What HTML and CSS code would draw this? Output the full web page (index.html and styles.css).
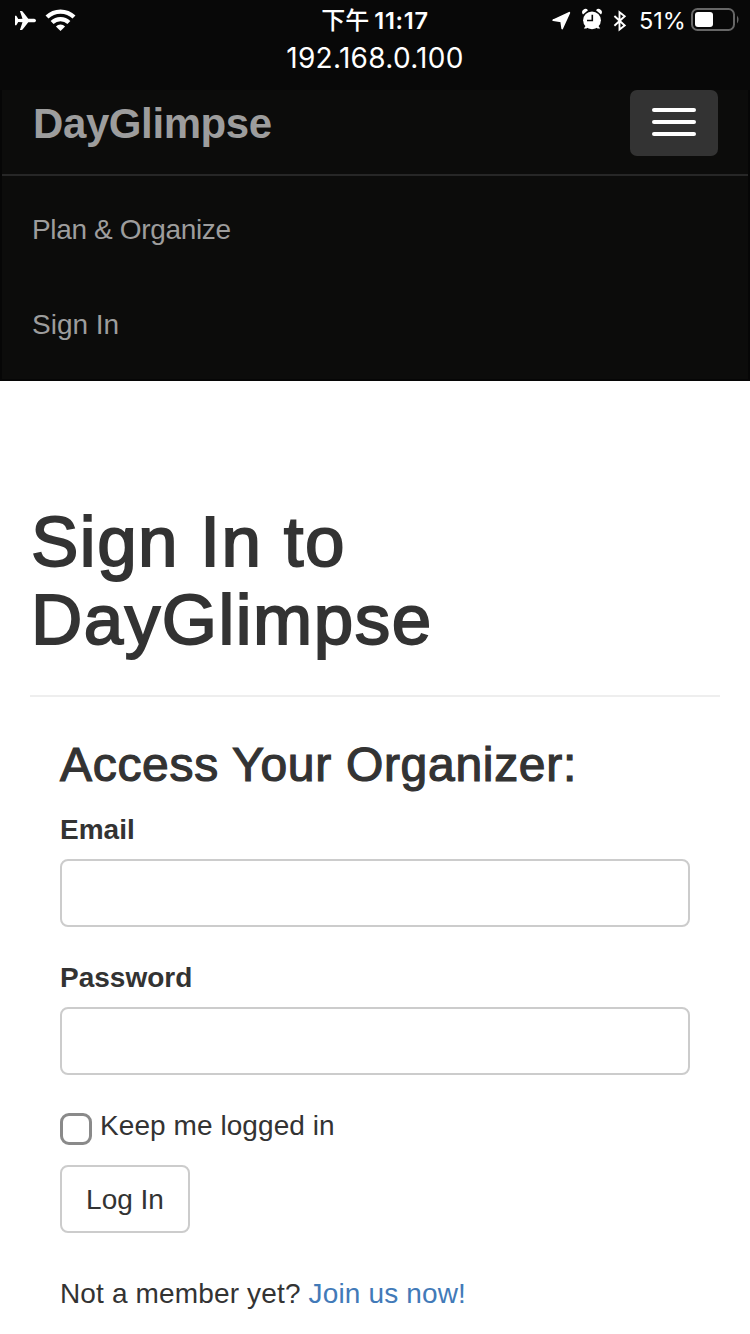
FILE: index.html
```html
<!DOCTYPE html>
<html lang="en">
<head>
<meta charset="utf-8">
<title>DayGlimpse</title>
<link rel="stylesheet" href="styles.css">
</head>
<body>
<header class="status">
  <div class="status-row">
    <svg class="status-left" width="80" height="40" viewBox="0 0 80 40" fill="#fff">
      <path d="M36 20.400c0-1.200-1.200-1.700-3-1.700h-4.700L22.800 11.700q-.5-.7-1.300-.7h-1.600l2.600 7.700L18.300 19 16.300 15.800H15v9.400h1.300l2-3.100 4.200.2-2.600 7.600h1.600q.8 0 1.300-.7l5.500-6.900H33c1.800 0 3-.7 3-1.900z"/>
      <g fill="none" stroke="#fff" stroke-width="4.200"><path d="M47 17.100a19.200 19.200 0 0 1 27 0"/><path d="M52.100 22.600a12 12 0 0 1 16.800 0"/></g>
      <path d="M60.500 31l-4.600-4.500a6.500 6.500 0 0 1 9.200 0z"/>
    </svg>
    <div class="clock"><span class="ampm">下午</span><span class="time">11:17</span></div>
    <div class="status-right">
      <svg width="89" height="40" viewBox="550 0 89 40" fill="#fff">
        <path d="M569.300 12.800L562.200 28.500 561.200 21.300 553.200 20.200z" stroke="#fff" stroke-width="1.800" stroke-linejoin="round"/>
        <circle cx="592" cy="20.300" r="8.900"/>
        <path d="M583 14.500a3 3 0 0 1 5-4.300zM601 14.500a3 3 0 0 0-5-4.300zM585.500 26l-1.700 2.600h2.600l2-1.300zM598.500 26l1.700 2.600h-2.600l-2-1.300z"/>
        <path d="M592.300 14.800v5.700H587" fill="none" stroke="#080808" stroke-width="1.600"/>
        <path d="M614.400 16l10.300 9.500-5.200 4V12.300l5.200 4-10.300 9.500" fill="none" stroke="#fff" stroke-width="1.900"/>
      </svg>
      <span class="percent">51%</span>
      <svg width="52" height="40" viewBox="690 0 52 40">
        <rect x="692" y="9" width="42" height="21" rx="5.500" fill="none" stroke="#666" stroke-width="2"/>
        <rect x="695" y="12" width="18" height="15" rx="3" fill="#fff"/>
        <path d="M737 15.500q3 4 0 8z" fill="#666"/>
      </svg>
    </div>
  </div>
  <div class="address">192.168.0.100</div>
</header>
<nav class="navbar">
  <div class="nav-head">
    <a class="brand">DayGlimpse</a>
    <button class="toggle" aria-label="Menu"><i></i><i></i><i></i></button>
  </div>
  <ul class="menu"><li class="plan">Plan &amp; Organize</li><li>Sign In</li></ul>
</nav>
<main class="page">
  <h1 class="title">Sign In to<br>DayGlimpse</h1>
  <form class="form">
    <h3 class="subtitle">Access Your Organizer:</h3>
    <label class="label" for="email">Email</label>
    <input class="field" id="email" type="email">
    <label class="label second" for="password">Password</label>
    <input class="field" id="password" type="password">
    <label class="keep"><input class="box" type="checkbox"><span>Keep me logged in</span></label>
    <button class="login" type="button">Log In</button>
    <p class="join">Not a member yet? <a class="link">Join us now!</a></p>
  </form>
</main>
</body>
</html>
```

FILE: styles.css
```css
* { box-sizing: border-box; }
body { margin: 0; background: #fff; color: #333; font: 28px/40px "Liberation Sans", Arial, sans-serif; }
.status { height: 90px; background: #080808; color: #fff; font-family: Inter, "Noto Sans CJK TC", sans-serif; }
.status-row { display: grid; grid-template-columns: 1fr auto 1fr; height: 40px; }
.status-left { display: block; }
.clock { display: flex; gap: 5px; height: 40px; line-height: 42px; }
.ampm { font: 500 24px/38px "Noto Sans CJK TC", sans-serif; }
.time { font-size: 23.5px; font-weight: 600; letter-spacing: 0.7px; }
.status-right { display: flex; justify-content: flex-end; padding-right: 8px; }
.percent { width: 51px; font-size: 23.5px; line-height: 42px; white-space: nowrap; }
.address { text-align: center; font-size: 28px; line-height: 36px; letter-spacing: 0.3px; }
.navbar { height: 291px; background: #0c0c0b; border: solid #060606; border-width: 0 2px 2px; }
.nav-head { display: flex; justify-content: space-between; height: 86px; padding: 0 30px; border-bottom: 2px solid #272727; }
.brand { padding-left: 1px; color: #9d9d9d; font-size: 42px; font-weight: bold; line-height: 68px; letter-spacing: -0.4px; }
.toggle { display: flex; flex-direction: column; align-items: center; gap: 8px; width: 88px; height: 66px; padding: 18px 0 0; border: 0; border-radius: 7px; background: #333; }
.toggle i { width: 44px; height: 4px; border-radius: 2px; background: #fff; }
.menu { margin: 0; padding: 34px 30px 0; list-style: none; color: #9d9d9d; }
.menu li { height: 40px; margin-bottom: 55px; }
.plan { letter-spacing: -0.35px; }
.page { padding: 122px 30px 0; }
.title { margin: 0; padding: 0 0 36px 1px; border-bottom: 2px solid #eee; font-size: 71px; font-weight: normal; line-height: 78px; letter-spacing: 1.5px; -webkit-text-stroke: 1.9px #333; }
.form { display: flex; flex-direction: column; align-items: flex-start; padding: 41px 30px 0; }
.subtitle { margin: 0; font-size: 48px; font-weight: normal; line-height: 53px; letter-spacing: 0.7px; -webkit-text-stroke: 1.2px #333; }
.label { margin: 18px 0 10px; font-weight: bold; line-height: 42px; height: 40px; }
.second { margin-top: 30px; }
.field { width: 100%; height: 68px; padding: 12px 24px; border: 2px solid #ccc; border-radius: 8px; background: #fff; font: inherit; }
.keep { display: flex; gap: 8px; height: 40px; margin-top: 31px; letter-spacing: 0.07px; }
.box { appearance: none; width: 32px; height: 32px; margin: 7px 0 0; border: 3px solid #8a8a8a; border-radius: 9px; background: #fff; }
.login { width: 130px; height: 68px; margin-top: 19px; padding: 2px 0 0; border: 2px solid #ccc; border-radius: 8px; background: #fff; color: #333; font: inherit; }
.join { margin: 41px 0 0; letter-spacing: 0.15px; }
.link { color: #427ab8; }
```
